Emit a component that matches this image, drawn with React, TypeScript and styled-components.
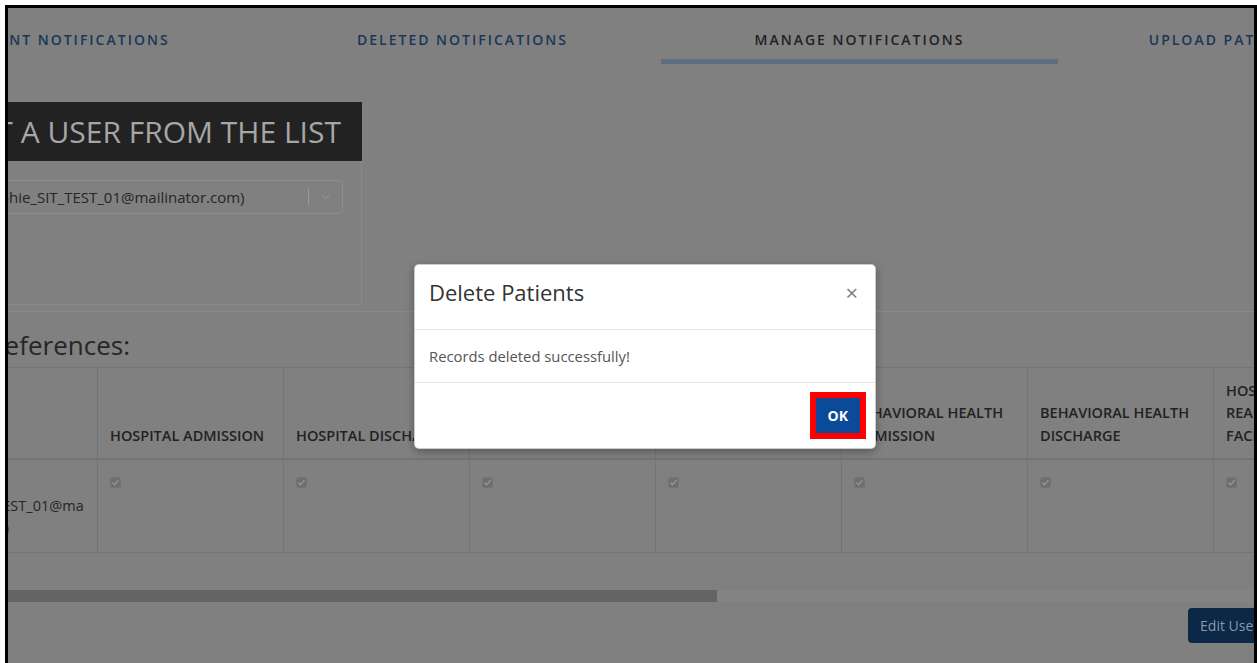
import React from "react";
import styled, { createGlobalStyle } from "styled-components";

const GlobalStyle = createGlobalStyle`
  html, body {
    margin: 0;
    padding: 0;
    background: #ffffff;
  }
  body {
    font-family: "Open Sans", "Liberation Sans", sans-serif;
    overflow: hidden;
  }
  *, *::before, *::after {
    box-sizing: border-box;
  }
`;

/* Window frame with the dimmed page behind the dialog */
const Frame = styled.div`
  position: relative;
  margin: 5px 0 0 5px;
  width: 1252px;
  height: 658px;
  border: 3px solid #000;
  border-bottom: none;
  background: #808080;
  overflow: hidden;
`;

const Page = styled.div`
  margin-left: -141px;
  width: 1588px;
`;

const TabBar = styled.nav`
  display: flex;
`;

const Tab = styled.div<{ $active?: boolean }>`
  width: 397px;
  display: flex;
  flex-direction: column;
  align-items: center;
  padding-top: 22px;
  font-size: 14px;
  font-weight: 600;
  letter-spacing: 2px;
  line-height: 20px;
  white-space: nowrap;
  color: ${(p) => (p.$active ? "#222222" : "#1b3656")};

  &::after {
    content: "";
    align-self: stretch;
    height: 5px;
    margin-top: 9px;
    background: ${(p) => (p.$active ? "#5f6f82" : "transparent")};
  }
`;

const Content = styled.main`
  width: 1404px;
  padding-left: 44px;
`;

const UserCard = styled.section`
  margin-top: 38px;
  width: 451px;
  border: 1px solid #8a8a8a;
  border-top: none;
`;

const CardTitle = styled.h2`
  margin: 0 -1px;
  height: 59px;
  padding-left: 1px;
  background: #222222;
  color: #a6a6a6;
  font-size: 30px;
  font-weight: 400;
  line-height: 59px;
  white-space: nowrap;
`;

const CardBody = styled.div`
  padding: 19px 18px 90px;
`;

const Select = styled.div`
  display: flex;
  align-items: center;
  height: 34px;
  padding-left: 14px;
  border: 1px solid #8e8e8e;
  border-radius: 4px;
`;

const SelectValue = styled.span`
  flex: 1;
  font-size: 15px;
  color: #262626;
  white-space: nowrap;
  overflow: hidden;
`;

const SelectSeparator = styled.span`
  width: 1px;
  align-self: stretch;
  margin: 8px 0;
  background: #9a9a9a;
`;

const SelectIndicator = styled.span`
  display: flex;
  align-items: center;
  justify-content: center;
  width: 33px;
`;

const Divider = styled.hr`
  margin: 6px 0 0;
  width: 1360px;
  height: 1px;
  border: none;
  background: #8a8a8a;
`;

const SectionHeading = styled.h3`
  margin: 19px 0 7px 4px;
  font-size: 26px;
  font-weight: 400;
  line-height: 28.6px;
  color: #262626;
  white-space: nowrap;
`;

const TableScroller = styled.div`
  width: 1360px;
  overflow: hidden;
`;

const Table = styled.table`
  border-collapse: collapse;
  table-layout: fixed;
  width: 1488px;
`;

const HeadCell = styled.th`
  width: 186px;
  padding: 12px 12px 11px;
  text-align: left;
  vertical-align: bottom;
  font-size: 14.5px;
  font-weight: 600;
  line-height: 22.5px;
  color: #222222;
  border: 1px solid #747474;
  border-bottom: 2px solid #747474;
`;

const Cell = styled.td`
  padding: 12px;
  vertical-align: top;
  font-size: 14.5px;
  line-height: 22.5px;
  color: #262626;
  border: 1px solid #747474;
  overflow-wrap: anywhere;
`;

const CheckMark = styled.span`
  display: inline-block;
  width: 11px;
  height: 11px;
  margin-top: 4px;
  line-height: 0;
`;

const ScrollTrack = styled.div`
  margin-top: 37px;
  width: 1360px;
  height: 12px;
  background: #838383;
`;

const ScrollThumb = styled.div`
  height: 100%;
  background: #646464;
`;

const Actions = styled.div`
  display: flex;
  justify-content: flex-end;
  width: 1360px;
  margin-top: 6px;
`;

const EditButton = styled.button`
  height: 35px;
  padding: 0 12px;
  border: none;
  border-radius: 4px;
  background: #0d2747;
  color: #8898ad;
  font-family: inherit;
  font-size: 14px;
  white-space: nowrap;
`;

/* Dialog */
const Modal = styled.div`
  position: absolute;
  left: 406px;
  top: 256px;
  width: 462px;
  background: #ffffff;
  border: 1px solid rgba(0, 0, 0, 0.2);
  border-radius: 5px;
  box-shadow: 0 3px 9px rgba(0, 0, 0, 0.3);
`;

const ModalHeader = styled.div`
  display: flex;
  justify-content: space-between;
  align-items: flex-start;
  padding: 10px 17px 20px 14px;
  border-bottom: 1px solid #e5e5e5;
`;

const ModalTitle = styled.h4`
  margin: 0;
  font-size: 22px;
  font-weight: 400;
  line-height: 34px;
  color: #333333;
`;

const CloseButton = styled.button`
  padding: 0;
  border: none;
  background: none;
  font-family: inherit;
  font-size: 22px;
  line-height: 34px;
  color: #7f7f7f;
`;

const ModalBody = styled.div`
  padding: 15px 15px 15px 14px;
  font-size: 14.8px;
  line-height: 22px;
  color: #555555;
`;

const ModalFooter = styled.div`
  display: flex;
  justify-content: flex-end;
  padding: 15px;
  border-top: 1px solid #e5e5e5;
`;

const OkButton = styled.button`
  height: 35px;
  padding: 0 12px;
  border: none;
  background: #0b4a99;
  color: #ffffff;
  font-family: inherit;
  font-size: 14px;
  font-weight: 700;
  outline: 6px solid #ff0000;
`;

const tabs = [
  { label: "PATIENT NOTIFICATIONS" },
  { label: "DELETED NOTIFICATIONS" },
  { label: "MANAGE NOTIFICATIONS", active: true },
  { label: "UPLOAD PATIENT ROSTER" },
];

const columns = [
  "USER",
  "HOSPITAL ADMISSION",
  "HOSPITAL DISCHARGE",
  "EMERGENCY ADMISSION",
  "EMERGENCY DISCHARGE",
  "BEHAVIORAL HEALTH ADMISSION",
  "BEHAVIORAL HEALTH DISCHARGE",
  "HOSPITAL READMISSIONS FACILITY",
];

const DisabledCheck = () => (
  <CheckMark>
    <svg width="11" height="11" viewBox="0 0 11 11">
      <rect x="0.5" y="0.5" width="10" height="10" rx="2" fill="#6e6e6e" stroke="#747474" />
      <path d="M2.4 5.6 L4.5 7.7 L8.6 3.1" fill="none" stroke="#969696" strokeWidth="1.4" />
    </svg>
  </CheckMark>
);

export default function App() {
  return (
    <>
      <GlobalStyle />
      <Frame>
        <Page>
          <TabBar>
            {tabs.map((t) => (
              <Tab key={t.label} $active={t.active}>
                {t.label}
              </Tab>
            ))}
          </TabBar>

          <Content>
            <UserCard>
              <CardTitle>SELECT A USER FROM THE LIST</CardTitle>
              <CardBody>
                <Select>
                  <SelectValue>Test (Sophie_SIT_TEST_01@mailinator.com)</SelectValue>
                  <SelectSeparator />
                  <SelectIndicator>
                    <svg width="9" height="6" viewBox="0 0 9 6">
                      <path d="M0.8 1 L4.5 4.6 L8.2 1" fill="none" stroke="#9a9a9a" strokeWidth="1" />
                    </svg>
                  </SelectIndicator>
                </Select>
              </CardBody>
            </UserCard>

            <Divider />

            <SectionHeading>User Preferences:</SectionHeading>

            <TableScroller>
              <Table>
                <thead>
                  <tr>
                    {columns.map((c) => (
                      <HeadCell key={c}>{c}</HeadCell>
                    ))}
                  </tr>
                </thead>
                <tbody>
                  <tr>
                    <Cell>Sofie (Sofie_SIT_TEST_01@mailinator.com)</Cell>
                    {columns.slice(1).map((c) => (
                      <Cell key={c}>
                        <DisabledCheck />
                      </Cell>
                    ))}
                  </tr>
                </tbody>
              </Table>
            </TableScroller>

            <ScrollTrack>
              <ScrollThumb style={{ width: `${Math.round((1360 / 2295) * 1360)}px` }} />
            </ScrollTrack>

            <Actions>
              <EditButton>Edit User</EditButton>
            </Actions>
          </Content>
        </Page>

        <Modal role="dialog" aria-labelledby="delete-patients-title">
          <ModalHeader>
            <ModalTitle id="delete-patients-title">Delete Patients</ModalTitle>
            <CloseButton aria-label="Close">×</CloseButton>
          </ModalHeader>
          <ModalBody>Records deleted successfully!</ModalBody>
          <ModalFooter>
            <OkButton>OK</OkButton>
          </ModalFooter>
        </Modal>
      </Frame>
    </>
  );
}
